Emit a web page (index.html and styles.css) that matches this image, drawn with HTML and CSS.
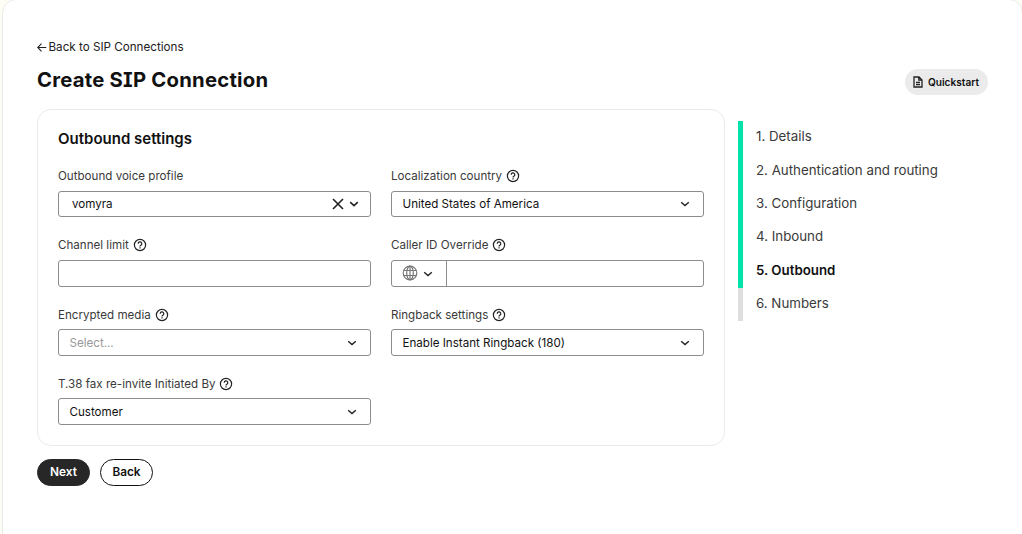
FILE: index.html
```html
<!DOCTYPE html>
<html lang="en">
<head>
    <meta charset="UTF-8">
    <meta name="viewport" content="width=device-width, initial-scale=1.0">
    <title>Create SIP Connection</title>
    <link rel="stylesheet" href="styles.css">
</head>
<body>
    <!-- Shared icons -->
    <svg class="sprite" width="0" height="0">
        <symbol id="help" viewBox="0 0 14 14">
            <circle cx="7" cy="7" r="5.6" />
            <path d="M5.2 5.7a1.8 1.8 0 1 1 2.7 1.5c-.6.4-.9.6-.9 1.2M7 9.3v1.2" />
        </symbol>
        <symbol id="chevron" viewBox="0 0 10 10">
            <path d="M1.2 3.2L5 6.6l3.8-3.4" />
        </symbol>
    </svg>

    <div class="page">
        <a class="back-link" href="#">
            <svg class="arrow" viewBox="0 0 10 10"><path d="M9.3 5.5H.8M4.5 1.7L.7 5.5l3.8 3.8" /></svg>
            Back to SIP Connections
        </a>

        <header>
            <h1>Create SIP Connection</h1>
            <button type="button" class="quickstart">
                <svg class="doc" viewBox="0 0 10 12"><path d="M1 1h5l3 3v7H1zM5.8 1v3.2H9M3 6.5h4M3 8.7h4" /></svg>
                Quickstart
            </button>
        </header>

        <div class="content">
            <form id="outbound-form">
                <div class="card">
                    <h2>Outbound settings</h2>
                    <div class="fields">
                        <div class="field">
                            <div class="label">Outbound voice profile</div>
                            <div class="control profile">
                                <span>vomyra</span>
                                <svg class="clear" viewBox="0 0 12 12"><path d="M1 1l10 10M11 1L1 11" /></svg>
                                <svg class="chevron"><use href="#chevron" /></svg>
                            </div>
                        </div>
                        <div class="field">
                            <div class="label">Localization country <svg class="help"><use href="#help" /></svg></div>
                            <div class="control">
                                <span>United States of America</span>
                                <svg class="chevron"><use href="#chevron" /></svg>
                            </div>
                        </div>
                        <div class="field">
                            <label class="label" for="channel_limit">Channel limit <svg class="help"><use href="#help" /></svg></label>
                            <input class="control" type="text" id="channel_limit" name="channel_limit">
                        </div>
                        <div class="field">
                            <label class="label" for="caller_id">Caller ID Override <svg class="help"><use href="#help" /></svg></label>
                            <div class="control phone">
                                <div class="country">
                                    <svg class="globe" viewBox="0 0 16 16">
                                        <circle cx="8" cy="8" r="6.8" />
                                        <ellipse cx="8" cy="8" rx="3.3" ry="6.8" />
                                        <path d="M8 1.2v13.6M1.8 5.5h12.4M1.8 10.5h12.4" />
                                    </svg>
                                    <svg class="chevron"><use href="#chevron" /></svg>
                                </div>
                                <input type="tel" id="caller_id" name="caller_id">
                            </div>
                        </div>
                        <div class="field lower">
                            <div class="label">Encrypted media <svg class="help"><use href="#help" /></svg></div>
                            <div class="control">
                                <span class="placeholder">Select...</span>
                                <svg class="chevron"><use href="#chevron" /></svg>
                            </div>
                        </div>
                        <div class="field lower">
                            <div class="label">Ringback settings <svg class="help"><use href="#help" /></svg></div>
                            <div class="control">
                                <span>Enable Instant Ringback (180)</span>
                                <svg class="chevron"><use href="#chevron" /></svg>
                            </div>
                        </div>
                        <div class="field lower">
                            <div class="label">T.38 fax re-invite Initiated By <svg class="help"><use href="#help" /></svg></div>
                            <div class="control">
                                <span>Customer</span>
                                <svg class="chevron"><use href="#chevron" /></svg>
                            </div>
                        </div>
                    </div>
                </div>

                <div class="actions">
                    <button type="submit" class="btn primary">Next</button>
                    <button type="button" class="btn">Back</button>
                </div>
            </form>

            <nav class="steps">
                <a class="done" href="#">1. Details</a>
                <a class="done" href="#">2. Authentication and routing</a>
                <a class="done" href="#">3. Configuration</a>
                <a class="done" href="#">4. Inbound</a>
                <a class="done current" href="#">5. Outbound</a>
                <a href="#">6. Numbers</a>
            </nav>
        </div>
    </div>
</body>
</html>
```
FILE: styles.css
```css
* {
    box-sizing: border-box;
}
body {
    font-family: Inter, "Liberation Sans", sans-serif;
    font-size: 12px;
    color: #111;
    background-color: #fefdf5;
    margin: 0;
    height: 534px;
    overflow: hidden;
}
svg {
    display: block;
    flex: none;
    fill: none;
    stroke: #222;
    stroke-width: 1.3;
}
.sprite {
    position: absolute;
}
.page {
    height: 560px;
    margin: -1px -1px 0 2px;
    padding: 39px 34px 0;
    background: white;
    border: 1px solid #ebebe8;
    border-radius: 14px;
}
.back-link {
    display: flex;
    align-items: center;
    gap: 1.5px;
    width: max-content;
    height: 16px;
    color: #222;
    font-size: 11.65px;
    text-decoration: none;
}
.arrow {
    width: 10px;
    height: 10px;
    stroke-width: 1.1;
}
header {
    display: flex;
    justify-content: space-between;
    height: 41px;
    margin-top: 9px;
}
h1 {
    margin: 0;
    font-size: 20.3px;
    line-height: 31px;
    font-weight: 650;
    letter-spacing: 0.23px;
    font-feature-settings: "cv08";
}
.quickstart {
    display: flex;
    align-items: center;
    gap: 5px;
    width: 83px;
    height: 26px;
    margin-top: 5px;
    padding: 0 0 0 8px;
    border: none;
    border-radius: 13px;
    background: #ebebeb;
    color: #111;
    font: 600 10.1px Inter, sans-serif;
    cursor: pointer;
}
.doc {
    width: 10px;
    height: 12px;
    stroke-width: 1.3;
}
.content {
    display: flex;
    gap: 13px;
    margin-top: 4px;
}
form {
    width: 688px;
}
.card {
    height: 337px;
    padding: 20px;
    border: 1px solid #ebebeb;
    border-radius: 14px;
}
h2 {
    margin: 0;
    font-size: 15px;
    line-height: 18px;
    font-weight: 600;
}
.fields {
    display: grid;
    grid-template-columns: 313px 313px;
    grid-auto-rows: 69px;
    column-gap: 20px;
    margin-top: 20px;
}
.label {
    display: flex;
    align-items: center;
    gap: 4px;
    height: 16px;
    margin-bottom: 7px;
    font-size: 11.6px;
    color: #3a3a3a;
}
.lower .label {
    height: 18px;
    margin-bottom: 5px;
}
.help {
    width: 14px;
    height: 14px;
    stroke-width: 1.2;
}
.control {
    display: flex;
    align-items: center;
    justify-content: space-between;
    width: 100%;
    height: 27px;
    padding: 0 13px 0 10.5px;
    border: 1px solid #8c8c8c;
    border-radius: 3px;
    background: white;
    font-size: 11.6px;
}
.field:nth-child(-n+2) .control {
    height: 26px;
}
.chevron {
    width: 10px;
    height: 10px;
    stroke-width: 1.4;
}
.field .profile {
    padding: 0 11px 0 13px;
}
.profile span {
    flex: 1;
}
.profile .chevron {
    stroke-width: 1.6;
}
.clear {
    width: 12px;
    height: 12px;
    margin-right: 5px;
    stroke-width: 1.6;
}
.placeholder {
    color: #999;
}
.field .phone {
    padding: 0;
}
.country {
    display: flex;
    align-items: center;
    gap: 5px;
    width: 55px;
    height: 100%;
    padding-left: 10px;
    border-right: 1px solid #8c8c8c;
}
.globe {
    width: 16px;
    height: 16px;
    margin-bottom: 2px;
    stroke: #777;
    stroke-width: 1.2;
}
.phone input {
    flex: 1;
    min-width: 0;
    border: none;
    background: none;
}
.actions {
    display: flex;
    gap: 10px;
    margin-top: 13px;
}
.btn {
    width: 53px;
    height: 27px;
    padding: 0 0 2px;
    border: 1px solid #111;
    border-radius: 14px;
    background: white;
    color: #111;
    font: 600 11.8px Inter, sans-serif;
    cursor: pointer;
}
.primary {
    border-color: #272727;
    background: #272727;
    color: white;
}
.steps {
    display: flex;
    flex-direction: column;
    margin-top: 12px;
}
.steps a {
    height: 33.33px;
    padding: 0.25px 0 0 13px;
    border-left: 5px solid #dedede;
    color: #3a3a3a;
    font-size: 13.3px;
    line-height: 31px;
    text-decoration: none;
}
.steps .done {
    border-left-color: #00e3aa;
}
.steps .current {
    color: #111;
    font-weight: 600;
}
```
